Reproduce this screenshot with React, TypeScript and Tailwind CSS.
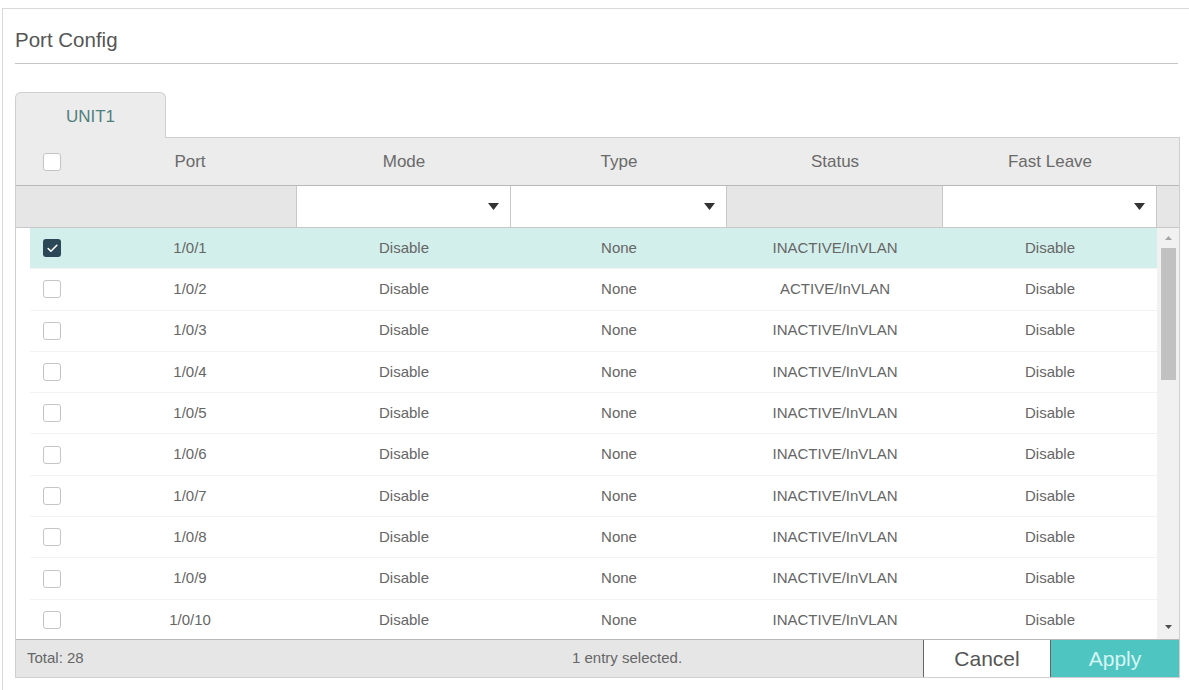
import { Check } from 'lucide-react';

type PortRow = {
  port: string;
  mode: string;
  type: string;
  status: string;
  fastLeave: string;
  checked?: boolean;
};

const rows: PortRow[] = Array.from({ length: 10 }, (_, i) => ({
  port: `1/0/${i + 1}`,
  mode: 'Disable',
  type: 'None',
  status: i === 1 ? 'ACTIVE/InVLAN' : 'INACTIVE/InVLAN',
  fastLeave: 'Disable',
  checked: i === 0,
}));

const CheckBox = ({ checked }: { checked?: boolean }) =>
  checked ? (
    <span className="flex h-[18px] w-[18px] items-center justify-center rounded-[3px] bg-[#2c4758]">
      <Check size={13} strokeWidth={3} className="text-white" />
    </span>
  ) : (
    <span className="block h-[18px] w-[18px] rounded-[3px] border border-[#c4c4c4] bg-white" />
  );

const Caret = () => (
  <svg width="11" height="7" viewBox="0 0 11 7">
    <path d="M0 0h11L5.5 7z" fill="#333" />
  </svg>
);

const SelectCell = ({ width }: { width: string }) => (
  <div className={`${width} flex h-full items-center justify-end border-r border-[#c8c8c8] bg-white pr-[11px]`}>
    <Caret />
  </div>
);

export default function App() {
  return (
    <div className="h-[690px] w-[1189px] overflow-hidden bg-white font-['Liberation_Sans',Arial,sans-serif]">
      <div className="ml-[2px] mt-[8px] h-[720px] w-[1220px] border border-[#d9d9d9] pl-[12px]">
        {/* page heading */}
        <div className="h-[55px] w-[1163px] border-b border-[#c4c4c4] pt-[20px] text-[20.5px] leading-[22px] text-[#555]">
          Port Config
        </div>

        {/* unit tab */}
        <div className="relative z-10 mt-[28px] -mb-px flex h-[46px] w-[151px] items-center justify-center rounded-t-[6px] border-l border-r border-t border-[#cfcfcf] bg-[#ececec] pt-[2px] text-[17px] text-[#4f7f7d]">
          UNIT1
        </div>

        <div className="w-[1165px] border border-[#cfcfcf] text-[#666]">
          {/* column titles */}
          <div className="flex h-[48px] items-center border-b border-[#b8b8b8] bg-[#ececec] text-[17px] text-[#6a6a6a]">
            <div className="w-[67px] pl-[27px]">
              <CheckBox />
            </div>
            <div className="w-[214px] text-center">Port</div>
            <div className="w-[214px] text-center">Mode</div>
            <div className="w-[216px] text-center">Type</div>
            <div className="w-[216px] text-center">Status</div>
            <div className="w-[214px] text-center">Fast Leave</div>
            <div className="w-[22px]" />
          </div>

          {/* filter row */}
          <div className="flex h-[42px] border-b border-[#c8c8c8] bg-[#e6e6e6]">
            <div className="h-full w-[281px] border-r border-[#c8c8c8]" />
            <SelectCell width="w-[214px]" />
            <SelectCell width="w-[216px]" />
            <div className="h-full w-[216px] border-r border-[#c8c8c8]" />
            <SelectCell width="w-[214px]" />
            <div className="w-[21px]" />
          </div>

          {/* rows + scrollbar */}
          <div className="flex h-[412px] overflow-hidden border-b border-[#b8b8b8]">
            <div className="ml-[14px] w-[1127px]">
              {rows.map((r) => (
                <div
                  key={r.port}
                  className={`flex h-[41.3px] items-center border-b border-[#f3f3f3] text-[15px] ${
                    r.checked ? 'bg-[#d3efeb]' : 'bg-white'
                  }`}
                >
                  <div className="w-[53px] pl-[13px]">
                    <CheckBox checked={r.checked} />
                  </div>
                  <div className="w-[214px] text-center">{r.port}</div>
                  <div className="w-[214px] text-center">{r.mode}</div>
                  <div className="w-[216px] text-center">{r.type}</div>
                  <div className="w-[216px] text-center">{r.status}</div>
                  <div className="w-[214px] text-center">{r.fastLeave}</div>
                </div>
              ))}
            </div>
            <div className="flex w-[22px] flex-col items-center bg-[#f1f1f1] pt-[8px]">
              <svg width="7" height="4" viewBox="0 0 7 4">
                <path d="M3.5 0L7 4H0z" fill="#a6a6a6" />
              </svg>
              <div className="mt-[8px] h-[132px] w-[15px] bg-[#c1c1c1]" />
              <div className="flex-1" />
              <svg width="7" height="4" viewBox="0 0 7 4" className="mb-[10px]">
                <path d="M0 0h7L3.5 4z" fill="#505050" />
              </svg>
            </div>
          </div>

          {/* footer */}
          <div className="flex h-[37px] items-center bg-[#e6e6e6] text-[15px]">
            <div className="w-[556px] pl-[11px]">Total: 28</div>
            <div>1 entry selected.</div>
            <div className="flex-1" />
            <button className="h-full w-[128px] border-l border-r border-[#666] bg-white text-[21px] text-[#555]">
              Cancel
            </button>
            <button className="h-full w-[128px] bg-[#4ec5c1] text-[21px] text-[#d6f6f3]">Apply</button>
          </div>
        </div>
      </div>
    </div>
  );
}
